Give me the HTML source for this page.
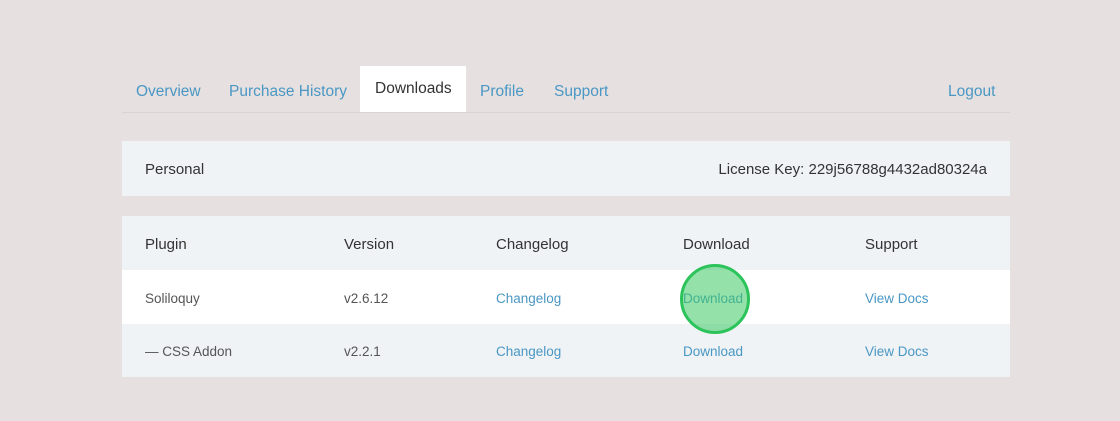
<!DOCTYPE html>
<html><head><style>
body{margin:0;width:1120px;height:421px;background:#e6e1e0;font-family:"Liberation Sans",sans-serif;position:relative;overflow:hidden}
.a{position:absolute;white-space:nowrap}
.tab{font-size:15.5px;color:#4a97c4;top:83px}
.cell{font-size:13.5px}
.lk{color:#4a97c4}
.hd{font-size:15px;color:#333;top:236px}
</style></head><body>
<div class="a" style="left:360px;top:66px;width:106px;height:47px;background:#fff"></div>
<div class="a" style="left:122px;top:112px;width:888px;height:1px;background:#d8d4d3"></div>
<div class="a tab" style="left:136px">Overview</div>
<div class="a tab" style="left:229px">Purchase History</div>
<div class="a tab" style="left:375px;top:80px;color:#333">Downloads</div>
<div class="a tab" style="left:480px">Profile</div>
<div class="a tab" style="left:554px">Support</div>
<div class="a tab" style="left:948px">Logout</div>
<div class="a" style="left:122px;top:141px;width:888px;height:55px;background:#eff3f5"></div>
<div class="a" style="left:145px;top:161px;font-size:15px;color:#333">Personal</div>
<div class="a" style="right:133px;top:161px;font-size:15px;color:#333">License Key: 229j56788g4432ad80324a</div>
<div class="a" style="left:122px;top:216px;width:888px;height:54px;background:#eff3f5"></div>
<div class="a" style="left:122px;top:270px;width:888px;height:54px;background:#fff"></div>
<div class="a" style="left:122px;top:324px;width:888px;height:53px;background:#eff3f5"></div>
<div class="a hd" style="left:145px">Plugin</div>
<div class="a hd" style="left:344px">Version</div>
<div class="a hd" style="left:496px">Changelog</div>
<div class="a hd" style="left:683px">Download</div>
<div class="a hd" style="left:865px">Support</div>
<div class="a cell" style="left:145px;top:291px;color:#555">Soliloquy</div>
<div class="a cell" style="left:344px;top:291px;color:#555">v2.6.12</div>
<div class="a cell lk" style="left:496px;top:291px">Changelog</div>
<div class="a cell lk" style="left:683px;top:291px">Download</div>
<div class="a cell lk" style="left:865px;top:291px">View Docs</div>
<div class="a cell" style="left:145px;top:344px;color:#555">— CSS Addon</div>
<div class="a cell" style="left:344px;top:344px;color:#555">v2.2.1</div>
<div class="a cell lk" style="left:496px;top:344px">Changelog</div>
<div class="a cell lk" style="left:683px;top:344px">Download</div>
<div class="a cell lk" style="left:865px;top:344px">View Docs</div>
<div class="a" style="left:680px;top:264px;width:64px;height:64px;border:3px solid #2cc45a;border-radius:50%;background:rgba(60,200,100,0.55)"></div>
</body></html>
